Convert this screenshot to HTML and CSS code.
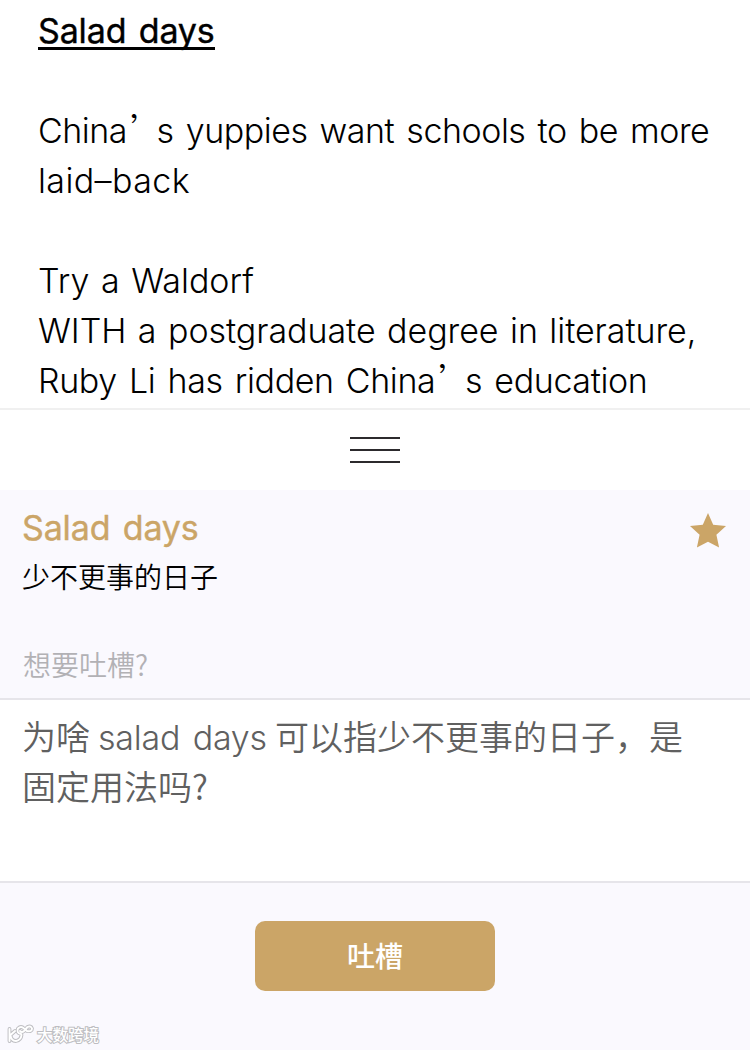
FILE: index.html
```
<!DOCTYPE html>
<html lang="zh-CN">
<head>
  <meta charset="UTF-8" />
  <title>Salad days</title>
  <link rel="stylesheet" href="styles.css">
</head>
<body>

  <!-- 原文 -->
  <div class="article">
    <p><span class="word">Salad days</span></p>
    <p class="line1">China<span class="quote">’</span>s yuppies want schools to be more</p>
    <p class="line2">laid–back</p>
    <p class="line3">Try a Waldorf</p>
    <p class="line4">WITH a postgraduate degree in literature,</p>
    <p class="line5">Ruby Li has ridden China<span class="quote">’</span>s education</p>
  </div>

  <!-- 拖动条 -->
  <div class="handle">
    <i></i>
    <i></i>
    <i></i>
  </div>

  <!-- 释义 -->
  <div class="meaning">
    <div class="meaning-head">
      <h2>Salad days</h2>
      <svg class="star" width="36" height="35" viewBox="0 0 36 35">
        <path d="M18 0L23.2 11.8L36 13.1L26.4 21.7L29.1 34.4L18 28.8L6.9 34.4L9.6 21.7L0 13.1L12.8 11.8Z" fill="#cba567" />
      </svg>
    </div>
    <p class="translation">少不更事的日子</p>
    <p class="hint">想要吐槽?</p>
  </div>

  <div class="comment">
    <p>为啥<span class="latin">salad days</span>可以指少不更事的日子，是</p>
    <p>固定用法吗?</p>
  </div>

  <div class="footer">
    <button class="submit">吐槽</button>
  </div>

  <!-- 水印 -->
  <div class="watermark">
    <svg width="28" height="20" viewBox="0 0 28 20">
      <g fill="none" stroke-linecap="round" stroke-linejoin="round">
        <path stroke="#bdbdc1" stroke-width="3.8" d="M2.5 5V17M8 7L3.5 11Q4 17 9 17Q14 16 14.5 11M14 10Q9 9 11 4.5Q14 1.5 17 4.5L20 7Q25 8 25 4.5Q24 1.5 20.5 3L17 7Q15 9 13 7" />
        <path stroke="#fff" stroke-width="1.9" d="M2.5 5V17M8 7L3.5 11Q4 17 9 17Q14 16 14.5 11M14 10Q9 9 11 4.5Q14 1.5 17 4.5L20 7Q25 8 25 4.5Q24 1.5 20.5 3L17 7Q15 9 13 7" />
      </g>
    </svg>
    <span>大数跨境</span>
  </div>

</body>
</html>
```
FILE: styles.css
```
* {
  box-sizing: border-box;
}

body {
  display: flex;
  flex-direction: column;
  height: 1050px;
  margin: 0;
  overflow: hidden;
  font-family: Inter, "Noto Sans CJK SC", sans-serif;
  font-size: 34px;
  font-weight: 300;
  line-height: 50px;
  color: #000;
  background-color: #fff;
}

p, h2 {
  margin: 0;
  white-space: nowrap;
}

/* 原文 */
.article {
  height: 408px;
  padding: 6px 38px 0;
  word-spacing: 3px;
}

.word {
  display: inline-block;
  height: 44px;
  font-weight: 400;
  letter-spacing: -0.15px;
  -webkit-text-stroke: 0.4px #000;
  border-bottom: 3px solid #000;
}

.quote {
  margin: 0 10px 0 3px;
  font-family: "Noto Sans CJK SC", sans-serif;
  font-feature-settings: "halt";
  line-height: 1;
}

.line1, .line3 {
  margin-top: 50px;
}

.line1 {
  letter-spacing: -0.47px;
}

.line2 {
  letter-spacing: 0.4px;
}

.line3 {
  letter-spacing: 0;
  word-spacing: 2px;
}

.line4 {
  letter-spacing: -0.05px;
  word-spacing: 2px;
}

.line5 {
  letter-spacing: -0.38px;
}

/* 拖动条 */
.handle {
  display: flex;
  flex-direction: column;
  align-items: center;
  gap: 10px;
  height: 82px;
  padding-top: 27px;
  border-top: 2px solid #f0f0f0;
}

.handle i {
  width: 50px;
  height: 2px;
  background-color: #2c2a2d;
}

/* 释义 */
.meaning {
  height: 208px;
  padding: 13px 24px 0 22px;
  background-color: #faf9fe;
}

.meaning-head {
  display: flex;
  justify-content: space-between;
  height: 48px;
}

.meaning-head h2 {
  font-size: 34px;
  font-weight: 400;
  letter-spacing: -0.15px;
  word-spacing: 3px;
  color: #cba567;
  -webkit-text-stroke: 0.4px #cba567;
}

.star {
  margin-top: 10px;
}

.translation, .hint {
  font-family: "Noto Sans CJK SC", sans-serif;
  font-size: 28px;
  font-weight: 350;
}

.hint {
  margin-top: 38px;
  padding-left: 1px;
  color: #b2b1b5;
}

/* 吐槽内容 */
.comment {
  height: 185px;
  padding: 11px 22px 0;
  font-family: "Noto Sans CJK SC", sans-serif;
  font-weight: 350;
  color: #606060;
  background-color: #fff;
  border-top: 2px solid #e6e5ea;
  border-bottom: 2px solid #e6e5ea;
}

.comment p {
  height: 50px;
}

.latin {
  margin: 0 8px;
  font-family: Inter, sans-serif;
  font-weight: 300;
  line-height: 1;
  letter-spacing: -0.2px;
  word-spacing: 3px;
}

.footer {
  flex: 1;
  display: flex;
  justify-content: center;
  align-items: flex-start;
  padding-top: 38px;
  background-color: #faf9fe;
}

.submit {
  width: 240px;
  height: 70px;
  padding: 0 0 2px;
  font-family: "Noto Sans CJK SC", sans-serif;
  font-size: 28px;
  font-weight: 500;
  color: #fff;
  background-color: #cba567;
  border: none;
  border-radius: 10px;
}

/* 水印 */
.watermark {
  position: absolute;
  left: 7px;
  bottom: 6px;
  display: flex;
  align-items: center;
  gap: 2px;
  font-family: "Noto Sans CJK SC", sans-serif;
  font-size: 15.5px;
  font-weight: 500;
  line-height: 20px;
  color: #fff;
}

.watermark span {
  -webkit-text-stroke: 2px #bdbdc1;
  paint-order: stroke fill;
}
```
